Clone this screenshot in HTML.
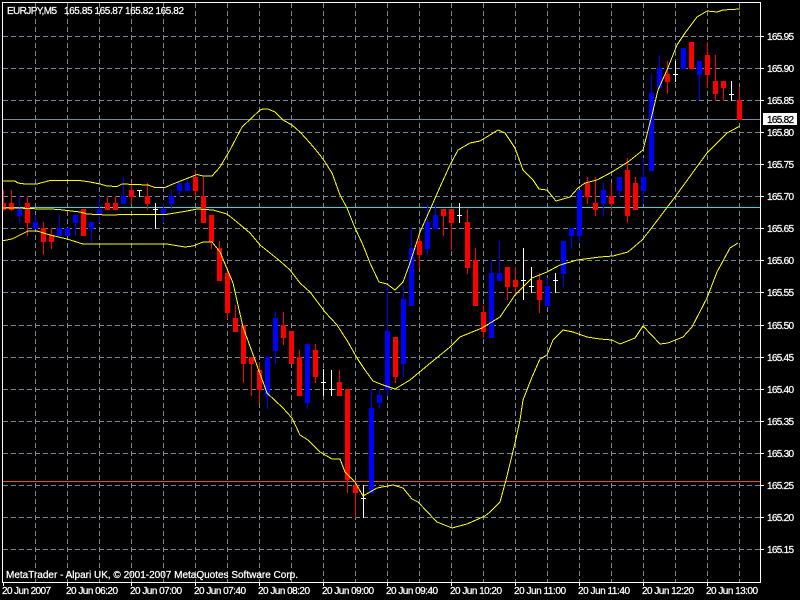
<!DOCTYPE html>
<html><head><meta charset="utf-8"><title>EURJPY,M5</title>
<style>
html,body{margin:0;padding:0;background:#000;width:800px;height:600px;overflow:hidden}
svg{display:block;position:absolute;left:0;top:0}
text{font-family:"Liberation Sans",sans-serif;font-size:10px;fill:#fff;stroke:#fff;stroke-width:.25px}
</style></head><body>
<svg width="800" height="600" viewBox="0 0 800 600" xmlns="http://www.w3.org/2000/svg">
<rect width="800" height="600" fill="#000"/>
<g shape-rendering="crispEdges" fill="none" stroke-width="1">
<path stroke="#778899" stroke-dasharray="5 3" d="M35.5 3V582M67.5 3V582M99.5 3V582M131.5 3V582M163.5 3V582M195.5 3V582M227.5 3V582M259.5 3V582M291.5 3V582M323.5 3V582M355.5 3V582M387.5 3V582M419.5 3V582M451.5 3V582M483.5 3V582M515.5 3V582M547.5 3V582M579.5 3V582M611.5 3V582M643.5 3V582M675.5 3V582M707.5 3V582M739.5 3V582"/>
<path stroke="#778899" stroke-dasharray="5 3" d="M3 36.5H760M3 68.5H760M3 100.5H760M3 132.5H760M3 164.5H760M3 196.5H760M3 228.5H760M3 260.5H760M3 292.5H760M3 325.5H760M3 357.5H760M3 389.5H760M3 421.5H760M3 453.5H760M3 485.5H760M3 517.5H760M3 549.5H760"/>
<path stroke="#778899" d="M3 119.5H760"/>
<path stroke="#20e0e0" d="M3 207.5H760"/>
<path stroke="#e85020" d="M3 481.5H760"/>

<path stroke="#f00" d="M3.5 190V211M11.5 190V211M27.5 196V236M43.5 222V255M51.5 228V249M83.5 209V236M107.5 196V210M115.5 196V210M131.5 183V204M147.5 183V210M195.5 170V197M203.5 177V223M211.5 215V249M219.5 241V281M227.5 267V319M235.5 305V332M243.5 325V383M251.5 357V396M259.5 362V403M283.5 312V345M291.5 331V364M299.5 350V396M315.5 344V383M339.5 370V396M347.5 389V493M355.5 480V518M395.5 337V383M419.5 235V268M443.5 209V236M451.5 209V250M467.5 209V274M475.5 248V306M483.5 305V338M507.5 267V300M515.5 267V293M539.5 273V313M587.5 177V204M595.5 177V216M611.5 183V210M627.5 158V223M635.5 177V210M667.5 61V94M691.5 42V69M707.5 42V88M715.5 55V101M723.5 81V101M739.5 87V120"/>
<path stroke="#00f" d="M19.5 196V223M35.5 215V229M59.5 215V236M75.5 215V236M91.5 222V242M99.5 196V223M123.5 177V204M163.5 203V223M171.5 190V210M179.5 183V197M187.5 177V191M267.5 357V409M275.5 312V364M307.5 344V409M371.5 389V493M379.5 389V409M387.5 284V396M403.5 286V377M411.5 228V306M427.5 203V255M435.5 203V229M491.5 260V338M499.5 241V281M547.5 278V306M563.5 241V287M571.5 228V249M579.5 190V242M603.5 183V216M619.5 177V197M643.5 158V204M651.5 74V171M659.5 55V88M699.5 61V100"/>
<path stroke="#fff" d="M139.5 190V197M137 190.5H142M155.5 203V229M153 209.5H158M323.5 369V396M321 382.5H326M331.5 370V396M329 389.5H334M363.5 485V518M361 498.5H366M459.5 203V223M457 215.5H462M523.5 248V300M521 280.5H526M531.5 267V293M529 286.5H534M555.5 273V293M553 280.5H558M675.5 61V82M673 74.5H678M731.5 81V101M729 94.5H734"/>
</g>
<g shape-rendering="crispEdges">
<path fill="#f00" d="M3 203h3v7h-3zM9 203h5v7h-5zM25 203h5v20h-5zM41 228h5v14h-5zM49 235h5v7h-5zM81 209h5v27h-5zM105 203h5v7h-5zM113 203h5v7h-5zM129 190h5v7h-5zM145 196h5v8h-5zM193 177h5v14h-5zM201 196h5v27h-5zM209 215h5v27h-5zM217 248h5v33h-5zM225 273h5v40h-5zM233 318h5v14h-5zM241 325h5v39h-5zM249 357h5v7h-5zM257 370h5v20h-5zM281 325h5v13h-5zM289 331h5v33h-5zM297 357h5v39h-5zM313 350h5v27h-5zM337 382h5v14h-5zM345 389h5v91h-5zM353 485h5v8h-5zM393 337h5v40h-5zM417 241h5v14h-5zM441 209h5v7h-5zM449 209h5v14h-5zM465 222h5v46h-5zM473 260h5v46h-5zM481 312h5v20h-5zM505 267h5v20h-5zM513 280h5v7h-5zM537 280h5v20h-5zM585 183h5v14h-5zM593 203h5v7h-5zM609 196h5v8h-5zM625 170h5v46h-5zM633 183h5v27h-5zM665 74h5v8h-5zM689 42h5v27h-5zM705 55h5v20h-5zM713 81h5v13h-5zM721 81h5v7h-5zM737 100h5v20h-5z"/>
<path fill="#00f" d="M17 209h5v7h-5zM33 222h5v7h-5zM57 228h5v8h-5zM65 228h5v8h-5zM73 215h5v8h-5zM89 222h5v7h-5zM97 209h5v6h-5zM121 196h5v8h-5zM161 209h5v6h-5zM169 196h5v8h-5zM177 183h5v8h-5zM185 183h5v8h-5zM265 357h5v39h-5zM273 318h5v33h-5zM305 344h5v59h-5zM369 408h5v85h-5zM377 395h5v8h-5zM385 331h5v59h-5zM401 299h5v65h-5zM409 248h5v58h-5zM425 222h5v27h-5zM433 215h5v14h-5zM489 273h5v65h-5zM497 273h5v8h-5zM545 286h5v20h-5zM561 241h5v33h-5zM569 228h5v8h-5zM577 190h5v46h-5zM601 190h5v14h-5zM617 177h5v14h-5zM641 177h5v14h-5zM649 93h5v78h-5zM657 68h5v20h-5zM681 48h5v21h-5zM697 61h5v14h-5z"/>
</g>
<g fill="none" stroke="#ff0" stroke-width="1" shape-rendering="crispEdges">
<polyline points="3,181 15,181 18,183 25,184 37,184 50,180.5 80,180.5 90,182 100,184 107,186 117,186.5 122,184 148,185 155,187.5 165,187.5 173,184 197,174.5 203,176 212,176 220,167 230,150 242,127 260,110 263,109 268,109 275,112 283,120 292,125 300,132 310,143 320,155 325,162 332,173 340,195 347,208 355,228 363,245 370,263 379,282 387,284 395,290 403,282 410,263 420,232 433,203 440,187 450,165 458,150 470,143 480,141 490,135 498,130 505,133 515,148 523,170 533,180 539,189 547,190 556,201 570,197 578,188 585,183 597,180 612,172 628,162 643,150 652,115 658,90 667,70 677,45 685,33 697,17 707,11 717,12 723,10 740,9"/>
<polyline points="3,208 17,208 40,209 57,209.3 80,212 87,214 107,215 120,214.7 130,214.3 150,214.7 167,214.3 187,211 197,209 213,210 227,214 237,222 250,233 260,245 270,253 280,261 290,270 300,283 310,292 325,312 337,325 348,342 357,358 365,370 373,381 383,385 395,389 410,380 428,365 450,347 460,337 482,328 500,317 515,295 532,278 547,272 560,265 577,260 600,257 613,256 628,252 642,240 650,230 675,197 707,153 727,133 740,126"/>
<polyline points="3,240.7 12,239 20,235 28,231 37,231 50,235 67,239 83,244 150,244 167,244 185,247 193,246 203,242 212,242 220,252 233,283 243,327 255,360 267,393 283,408 292,418 300,435 308,440 320,452 332,459 340,459 345,472 355,482 363,496 377,488 393,485 403,488 412,499 418,502 437,522 452,528 467,524 485,516 490,512 500,502 506,480 515,443 520,420 523,400 532,377 540,359 547,355 553,340 563,330 573,332 587,337 600,339 612,340 620,344 635,338 643,326 660,344 668,343 683,337 692,327 707,298 717,272 730,248 738,243"/>
</g>
<path shape-rendering="crispEdges" fill="none" stroke="#fff" d="M2.5 2.5H760.5V582.5H2.5Z"/>
<path shape-rendering="crispEdges" fill="none" stroke="#fff" d="M761 36.5h3M761 68.5h3M761 100.5h3M761 132.5h3M761 164.5h3M761 196.5h3M761 228.5h3M761 260.5h3M761 292.5h3M761 325.5h3M761 357.5h3M761 389.5h3M761 421.5h3M761 453.5h3M761 485.5h3M761 517.5h3M761 549.5h3M3.5 583v3M67.5 583v3M131.5 583v3M195.5 583v3M259.5 583v3M323.5 583v3M387.5 583v3M451.5 583v3M515.5 583v3M579.5 583v3M643.5 583v3M707.5 583v3"/>
<rect x="763" y="113" width="34" height="12" fill="#fff" shape-rendering="crispEdges"/>

<text x="7" y="14" textLength="50">EURJPY,M5</text>
<text x="64" y="14" textLength="120">165.85 165.87 165.82 165.82</text>
<text x="6" y="578" textLength="292">MetaTrader - Alpari UK, © 2001-2007 MetaQuotes Software Corp.</text>

<text x="767" y="40" textLength="27">165.95</text>
<text x="767" y="72" textLength="27">165.90</text>
<text x="767" y="104" textLength="27">165.85</text>
<text x="767" y="136" textLength="27">165.80</text>
<text x="767" y="168" textLength="27">165.75</text>
<text x="767" y="200" textLength="27">165.70</text>
<text x="767" y="232" textLength="27">165.65</text>
<text x="767" y="264" textLength="27">165.60</text>
<text x="767" y="296" textLength="27">165.55</text>
<text x="767" y="329" textLength="27">165.50</text>
<text x="767" y="361" textLength="27">165.45</text>
<text x="767" y="393" textLength="27">165.40</text>
<text x="767" y="425" textLength="27">165.35</text>
<text x="767" y="457" textLength="27">165.30</text>
<text x="767" y="489" textLength="27">165.25</text>
<text x="767" y="521" textLength="27">165.20</text>
<text x="767" y="553" textLength="27">165.15</text>
<text x="767" y="123" textLength="27" style="fill:#000;stroke:#000">165.82</text>

<text x="2" y="594" textLength="49">20 Jun 2007</text>
<text x="66" y="594" textLength="52">20 Jun 06:20</text>
<text x="130" y="594" textLength="52">20 Jun 07:00</text>
<text x="194" y="594" textLength="52">20 Jun 07:40</text>
<text x="258" y="594" textLength="52">20 Jun 08:20</text>
<text x="322" y="594" textLength="52">20 Jun 09:00</text>
<text x="386" y="594" textLength="52">20 Jun 09:40</text>
<text x="450" y="594" textLength="52">20 Jun 10:20</text>
<text x="514" y="594" textLength="52">20 Jun 11:00</text>
<text x="578" y="594" textLength="52">20 Jun 11:40</text>
<text x="642" y="594" textLength="52">20 Jun 12:20</text>
<text x="706" y="594" textLength="52">20 Jun 13:00</text>
</svg>
</body></html>
